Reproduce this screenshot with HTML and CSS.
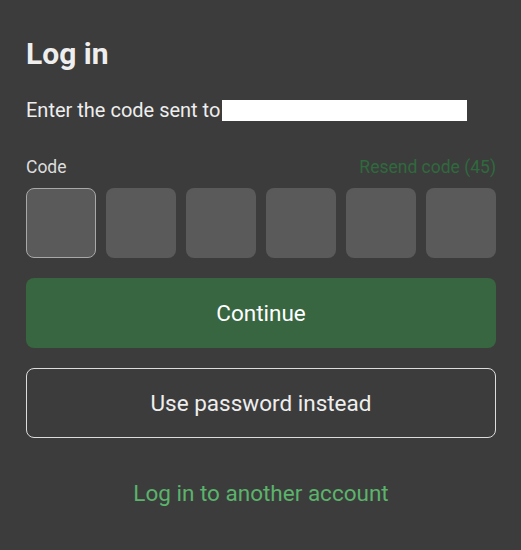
FILE: index.html
```html
<!DOCTYPE html>
<html>
<head>
<meta charset="utf-8">
<link rel="stylesheet" href="styles.css">
</head>
<body>
<div class="panel">
  <h1 class="title">Log in</h1>
  <p class="subtitle">Enter the code sent to<span class="redact"></span></p>
  <div class="code-head">
    <span class="label">Code</span>
    <span class="resend">Resend code (45)</span>
  </div>
  <div class="code-boxes">
    <div class="box active"></div>
    <div class="box"></div>
    <div class="box"></div>
    <div class="box"></div>
    <div class="box"></div>
    <div class="box"></div>
  </div>
  <button class="btn primary">Continue</button>
  <button class="btn outline">Use password instead</button>
  <a class="alt-link">Log in to another account</a>
</div>
</body>
</html>
```
FILE: styles.css
```css
html, body {
  margin: 0;
  padding: 0;
  background: #3c3c3c;
}
body {
  font-family: Roboto, "Liberation Sans", sans-serif;
  color: #e8e8e8;
  width: 521px;
  height: 550px;
  overflow: hidden;
}
.panel {
  padding: 36px 25px 0 26px;
  display: flex;
  flex-direction: column;
}
.title {
  margin: 0;
  font-size: 30px;
  font-weight: 700;
  line-height: 36px;
  color: #eeeeee;
}
.subtitle {
  margin: 26px 0 0 0;
  font-size: 20px;
  line-height: 24px;
  color: #eeeeee;
  display: flex;
  align-items: center;
}
.redact {
  display: inline-block;
  width: 245px;
  height: 21px;
  background: #ffffff;
  margin-left: 2px;
}
.code-head {
  margin-top: 35px;
  display: flex;
  justify-content: space-between;
  font-size: 17.5px;
  line-height: 20px;
}
.label { color: #dddddd; }
.resend { color: #2f6a3c; }
.code-boxes {
  margin-top: 11px;
  display: grid;
  grid-template-columns: repeat(6, 70px);
  gap: 10px;
}
.box {
  height: 70px;
  border-radius: 8px;
  background: #5a5a5a;
  box-sizing: border-box;
}
.box.active {
  border: 1px solid #a8a8a8;
}
.btn {
  height: 70px;
  border-radius: 8px;
  font-family: Roboto, "Liberation Sans", sans-serif;
  font-size: 22.5px;
  box-sizing: border-box;
  width: 100%;
  cursor: pointer;
}
.primary {
  margin-top: 20px;
  background: #376641;
  border: none;
  color: #ffffff;
}
.outline {
  margin-top: 20px;
  background: transparent;
  border: 1px solid #dcdcdc;
  color: #eeeeee;
}
.alt-link {
  margin-top: 43px;
  text-align: center;
  font-size: 22.5px;
  line-height: 24px;
  color: #5bb36c;
}
```
